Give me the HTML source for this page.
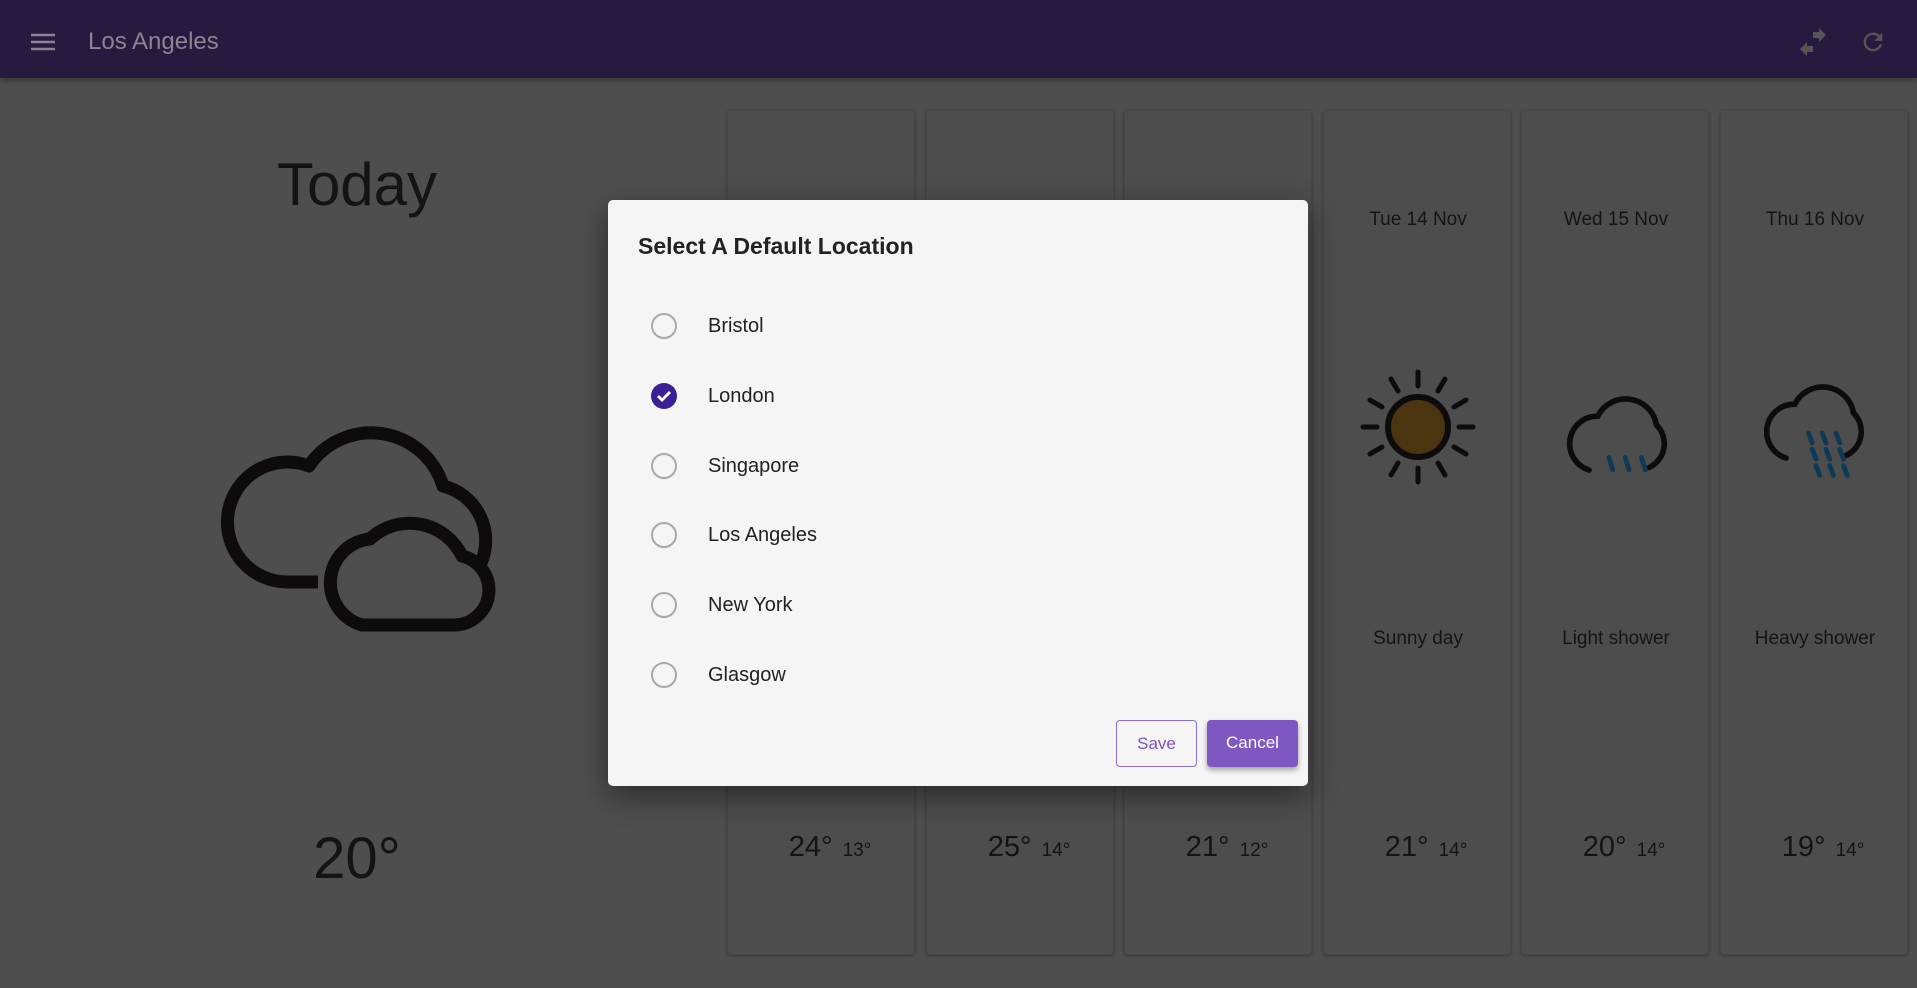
<!DOCTYPE html>
<html><head><meta charset="utf-8"><style>
*{margin:0;padding:0;box-sizing:border-box}
body{width:1917px;height:988px;overflow:hidden;background:#4e4e4e;font-family:"Liberation Sans",Roboto,sans-serif;position:relative;color:#141414}
.bar{position:absolute;left:0;top:0;width:1917px;height:78px;background:#261a3e;box-shadow:0 2px 6px rgba(0,0,0,.35)}
.title{position:absolute;left:88px;top:28px;font-size:24px;color:#8a8494}
.card{position:absolute;top:110px;width:188px;height:845px;border-radius:4px;background:#4d4d4d;box-shadow:0 1px 3px rgba(0,0,0,.3);border:1px solid #474747}
.date{position:absolute;top:208px;font-size:19px;text-align:center;width:188px}
.desc{position:absolute;top:627px;font-size:19px;text-align:center;width:188px}
.tmp{position:absolute;top:830px;text-align:center;width:188px;padding-left:16px}
.tmp b{font-weight:normal;font-size:29px}
.tmp s{text-decoration:none;font-size:19px;margin-left:10px}
.dlg{position:absolute;left:608px;top:200px;width:700px;height:586px;background:#f5f5f5;border-radius:5px;box-shadow:0 10px 30px rgba(0,0,0,.45)}
.dt{position:absolute;left:30px;top:33px;font-size:23px;font-weight:bold;color:#222}
.r{position:absolute;left:43px;width:26px;height:26px;border:2.5px solid #a9a9a9;border-radius:50%}
.l{position:absolute;left:100px;font-size:20px;color:#222}
.btn{position:absolute;top:520px;height:47px;border-radius:4px;font-size:17px;text-align:center;line-height:45px}
</style></head><body>
<div class="bar">
<svg style="position:absolute;left:30px;top:30px" width="26" height="24"><path d="M1 5h24M1 12h24M1 19h24" stroke="#8a8494" stroke-width="2.6"/></svg>
<div class="title">Los Angeles</div>
<svg style="position:absolute;left:1798px;top:28px" width="30" height="28" viewBox="0 0 30 28"><path d="M15 4h6V0l7 7-7 7v-4h-6zM15 24H9v4l-7-7 7-7v4h6z" fill="#555"/></svg>
<svg style="position:absolute;left:1859px;top:28px" width="28" height="28" viewBox="0 0 24 24"><path d="M17.65 6.35A7.96 7.96 0 0 0 12 4a8 8 0 1 0 7.73 10h-2.08A6 6 0 1 1 12 6c1.66 0 3.14.69 4.22 1.78L13 11h7V4z" fill="#555"/></svg>
</div>
<div style="position:absolute;left:0;width:714px;top:150px;text-align:center;font-size:60px">Today</div>
<div style="position:absolute;left:0;width:714px;top:825px;text-align:center;font-size:58px">20°</div>
<svg style="position:absolute;left:0;top:0" width="1917" height="988">
<path d="M318,582 L288,582 A60 60 0 1 1 309,466 A75 75 0 0 1 443,486 A56 56 0 0 1 480,565" fill="none" stroke="#0d0b0b" stroke-width="13" stroke-linejoin="round"/>
<path d="M362,625 A44 44 0 0 1 370,539 A58 58 0 0 1 462,556 A35 35 0 0 1 452,625 Z" fill="#4d4d4d" stroke="#0d0b0b" stroke-width="13" stroke-linejoin="round"/>
</svg>
<div class="card" style="left:727px"><div class="tmp" style="top:720px"><b>24°</b><s>13°</s></div></div>
<div class="card" style="left:926px"><div class="tmp" style="top:720px"><b>25°</b><s>14°</s></div></div>
<div class="card" style="left:1124px"><div class="tmp" style="top:720px"><b>21°</b><s>12°</s></div></div>
<div class="card" style="left:1323px"><div class="date" style="top:98px">Tue 14 Nov</div>
<svg style="position:absolute;left:36px;top:258px" width="116" height="116" viewBox="-58 -58 116 116"><circle r="30" fill="#4a3510" stroke="#0d0b0b" stroke-width="6"/><g stroke="#0d0b0b" stroke-width="5" stroke-linecap="round"><path d="M0-41v-14M0 41v14M-41 0h-14M41 0h14M20-36l7-12M-20-36l-7-12M20 36l7 12M-20 36l-7 12M36-20l12-7M-36-20l-12-7M36 20l12 7M-36 20l-12 7"/></g></svg>
<div class="desc" style="top:517px">Sunny day</div><div class="tmp" style="top:720px"><b>21°</b><s>14°</s></div></div>
<div class="card" style="left:1521px"><div class="date" style="top:98px">Wed 15 Nov</div>
<svg style="position:absolute;left:37px;top:284px" width="130" height="100" viewBox="0 0 104 80"><path d="M24 60A22 22 0 0 1 31 17A25 25 0 0 1 78 24A21 21 0 0 1 72 58" fill="none" stroke="#0d0b0b" stroke-width="4.5" stroke-linecap="round"/><path d="M40 50l3 10M53 50l3 10M66 50l3 10" stroke="#0f3a55" stroke-width="3.8" stroke-linecap="round"/></svg>
<div class="desc" style="top:517px">Light shower</div><div class="tmp" style="top:720px"><b>20°</b><s>14°</s></div></div>
<div class="card" style="left:1720px"><div class="date" style="top:98px">Thu 16 Nov</div>
<svg style="position:absolute;left:35px;top:272px" width="130" height="115" viewBox="0 0 104 92"><path d="M24 60A22 22 0 0 1 31 17A25 25 0 0 1 78 24A21 21 0 0 1 72 58" fill="none" stroke="#0d0b0b" stroke-width="4.5" stroke-linecap="round"/><path d="M42 40l3 8M53 40l3 8M64 40l3 8M45 53l3 8M56 53l3 8M67 53l3 8M48 66l3 8M59 66l3 8M70 66l3 8" stroke="#0f3a55" stroke-width="3.8" stroke-linecap="round"/></svg>
<div class="desc" style="top:517px">Heavy shower</div><div class="tmp" style="top:720px"><b>19°</b><s>14°</s></div></div>
<div class="dlg">
<div class="dt">Select A Default Location</div>
<div class="r" style="top:113px"></div><div class="l" style="top:115px">Bristol</div>
<svg style="position:absolute;left:42px;top:182px" width="28" height="28"><circle cx="14" cy="14" r="13" fill="#3c1f94"/><path d="M8 14l4 4 8-8" fill="none" stroke="#fff" stroke-width="2.8"/></svg><div class="l" style="top:185px">London</div>
<div class="r" style="top:253px"></div><div class="l" style="top:255px">Singapore</div>
<div class="r" style="top:322px"></div><div class="l" style="top:324px">Los Angeles</div>
<div class="r" style="top:392px"></div><div class="l" style="top:394px">New York</div>
<div class="r" style="top:462px"></div><div class="l" style="top:464px">Glasgow</div>
<div class="btn" style="left:508px;width:81px;border:1px solid #8a6fd0;color:#7b52c4;background:#f5f5f5">Save</div>
<div class="btn" style="left:599px;width:91px;background:#7e57c2;color:#fff;box-shadow:0 3px 6px rgba(0,0,0,.35)">Cancel</div>
</div>
</body></html>
